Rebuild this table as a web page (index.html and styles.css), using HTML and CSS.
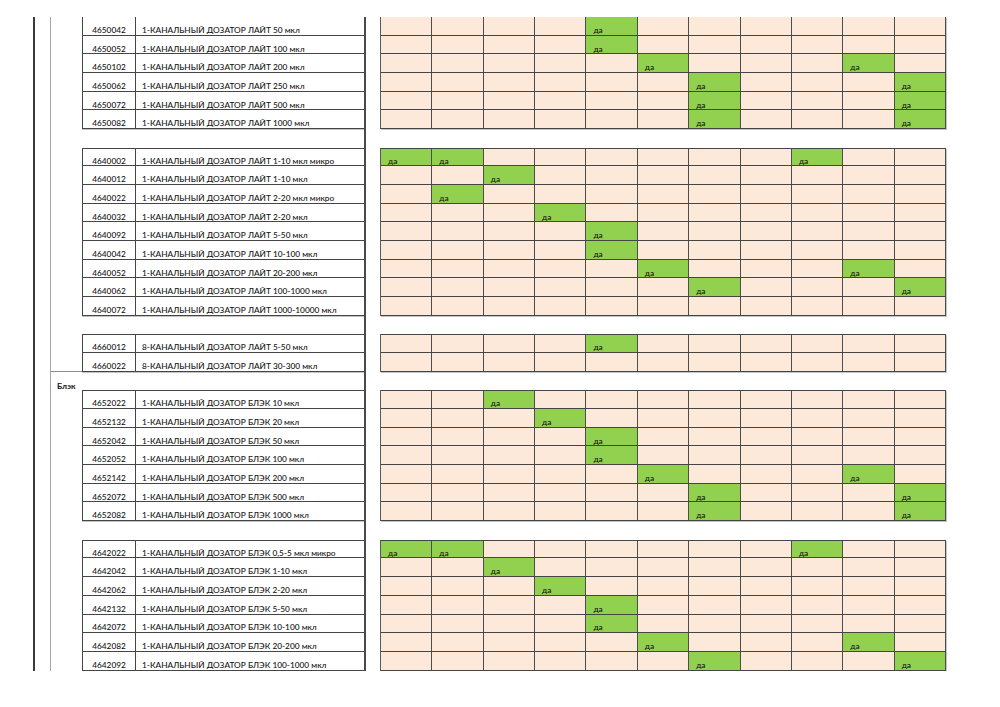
FILE: index.html
```html
<!DOCTYPE html>
<html lang="ru">
<head>
<meta charset="utf-8">
<title>Дозаторы</title>
<link rel="stylesheet" href="styles.css">
</head>
<body>
<div class="sheet">
  <div class="left">
    <div class="inner">
      <div class="grp first">
        <div class="row"><span class="code">4650042</span><span class="name">1-КАНАЛЬНЫЙ ДОЗАТОР ЛАЙТ 50 мкл</span></div>
        <div class="row"><span class="code">4650052</span><span class="name">1-КАНАЛЬНЫЙ ДОЗАТОР ЛАЙТ 100 мкл</span></div>
        <div class="row"><span class="code">4650102</span><span class="name">1-КАНАЛЬНЫЙ ДОЗАТОР ЛАЙТ 200 мкл</span></div>
        <div class="row"><span class="code">4650062</span><span class="name">1-КАНАЛЬНЫЙ ДОЗАТОР ЛАЙТ 250 мкл</span></div>
        <div class="row"><span class="code">4650072</span><span class="name">1-КАНАЛЬНЫЙ ДОЗАТОР ЛАЙТ 500 мкл</span></div>
        <div class="row"><span class="code">4650082</span><span class="name">1-КАНАЛЬНЫЙ ДОЗАТОР ЛАЙТ 1000 мкл</span></div>
      </div>
      <div class="gap"></div>
      <div class="grp">
        <div class="row"><span class="code">4640002</span><span class="name">1-КАНАЛЬНЫЙ ДОЗАТОР ЛАЙТ 1-10 мкл микро</span></div>
        <div class="row"><span class="code">4640012</span><span class="name">1-КАНАЛЬНЫЙ ДОЗАТОР ЛАЙТ 1-10 мкл</span></div>
        <div class="row"><span class="code">4640022</span><span class="name">1-КАНАЛЬНЫЙ ДОЗАТОР ЛАЙТ 2-20 мкл микро</span></div>
        <div class="row"><span class="code">4640032</span><span class="name">1-КАНАЛЬНЫЙ ДОЗАТОР ЛАЙТ 2-20 мкл</span></div>
        <div class="row"><span class="code">4640092</span><span class="name">1-КАНАЛЬНЫЙ ДОЗАТОР ЛАЙТ 5-50 мкл</span></div>
        <div class="row"><span class="code">4640042</span><span class="name">1-КАНАЛЬНЫЙ ДОЗАТОР ЛАЙТ 10-100 мкл</span></div>
        <div class="row"><span class="code">4640052</span><span class="name">1-КАНАЛЬНЫЙ ДОЗАТОР ЛАЙТ 20-200 мкл</span></div>
        <div class="row"><span class="code">4640062</span><span class="name">1-КАНАЛЬНЫЙ ДОЗАТОР ЛАЙТ 100-1000 мкл</span></div>
        <div class="row"><span class="code">4640072</span><span class="name">1-КАНАЛЬНЫЙ ДОЗАТОР ЛАЙТ 1000-10000 мкл</span></div>
      </div>
      <div class="gap"></div>
      <div class="grp">
        <div class="row"><span class="code">4660012</span><span class="name">8-КАНАЛЬНЫЙ ДОЗАТОР ЛАЙТ 5-50 мкл</span></div>
        <div class="row"><span class="code">4660022</span><span class="name">8-КАНАЛЬНЫЙ ДОЗАТОР ЛАЙТ 30-300 мкл</span></div>
      </div>
      <div class="sect">Блэк</div>
      <div class="grp">
        <div class="row"><span class="code">4652022</span><span class="name">1-КАНАЛЬНЫЙ ДОЗАТОР БЛЭК 10 мкл</span></div>
        <div class="row"><span class="code">4652132</span><span class="name">1-КАНАЛЬНЫЙ ДОЗАТОР БЛЭК 20 мкл</span></div>
        <div class="row"><span class="code">4652042</span><span class="name">1-КАНАЛЬНЫЙ ДОЗАТОР БЛЭК 50 мкл</span></div>
        <div class="row"><span class="code">4652052</span><span class="name">1-КАНАЛЬНЫЙ ДОЗАТОР БЛЭК 100 мкл</span></div>
        <div class="row"><span class="code">4652142</span><span class="name">1-КАНАЛЬНЫЙ ДОЗАТОР БЛЭК 200 мкл</span></div>
        <div class="row"><span class="code">4652072</span><span class="name">1-КАНАЛЬНЫЙ ДОЗАТОР БЛЭК 500 мкл</span></div>
        <div class="row"><span class="code">4652082</span><span class="name">1-КАНАЛЬНЫЙ ДОЗАТОР БЛЭК 1000 мкл</span></div>
      </div>
      <div class="gap"></div>
      <div class="grp">
        <div class="row"><span class="code">4642022</span><span class="name">1-КАНАЛЬНЫЙ ДОЗАТОР БЛЭК 0,5-5 мкл микро</span></div>
        <div class="row"><span class="code">4642042</span><span class="name">1-КАНАЛЬНЫЙ ДОЗАТОР БЛЭК 1-10 мкл</span></div>
        <div class="row"><span class="code">4642062</span><span class="name">1-КАНАЛЬНЫЙ ДОЗАТОР БЛЭК 2-20 мкл</span></div>
        <div class="row"><span class="code">4642132</span><span class="name">1-КАНАЛЬНЫЙ ДОЗАТОР БЛЭК 5-50 мкл</span></div>
        <div class="row"><span class="code">4642072</span><span class="name">1-КАНАЛЬНЫЙ ДОЗАТОР БЛЭК 10-100 мкл</span></div>
        <div class="row"><span class="code">4642082</span><span class="name">1-КАНАЛЬНЫЙ ДОЗАТОР БЛЭК 20-200 мкл</span></div>
        <div class="row"><span class="code">4642092</span><span class="name">1-КАНАЛЬНЫЙ ДОЗАТОР БЛЭК 100-1000 мкл</span></div>
      </div>
    </div>
  </div>

  <div class="right">
    <div class="rgrp first">
      <div class="rrow"><i></i><i></i><i></i><i></i><i class="y">да</i><i></i><i></i><i></i><i></i><i></i><i></i></div>
      <div class="rrow"><i></i><i></i><i></i><i></i><i class="y">да</i><i></i><i></i><i></i><i></i><i></i><i></i></div>
      <div class="rrow"><i></i><i></i><i></i><i></i><i></i><i class="y">да</i><i></i><i></i><i></i><i class="y">да</i><i></i></div>
      <div class="rrow"><i></i><i></i><i></i><i></i><i></i><i></i><i class="y">да</i><i></i><i></i><i></i><i class="y">да</i></div>
      <div class="rrow"><i></i><i></i><i></i><i></i><i></i><i></i><i class="y">да</i><i></i><i></i><i></i><i class="y">да</i></div>
      <div class="rrow"><i></i><i></i><i></i><i></i><i></i><i></i><i class="y">да</i><i></i><i></i><i></i><i class="y">да</i></div>
    </div>
    <div class="gap"></div>
    <div class="rgrp">
      <div class="rrow"><i class="y">да</i><i class="y">да</i><i></i><i></i><i></i><i></i><i></i><i></i><i class="y">да</i><i></i><i></i></div>
      <div class="rrow"><i></i><i></i><i class="y">да</i><i></i><i></i><i></i><i></i><i></i><i></i><i></i><i></i></div>
      <div class="rrow"><i></i><i class="y">да</i><i></i><i></i><i></i><i></i><i></i><i></i><i></i><i></i><i></i></div>
      <div class="rrow"><i></i><i></i><i></i><i class="y">да</i><i></i><i></i><i></i><i></i><i></i><i></i><i></i></div>
      <div class="rrow"><i></i><i></i><i></i><i></i><i class="y">да</i><i></i><i></i><i></i><i></i><i></i><i></i></div>
      <div class="rrow"><i></i><i></i><i></i><i></i><i class="y">да</i><i></i><i></i><i></i><i></i><i></i><i></i></div>
      <div class="rrow"><i></i><i></i><i></i><i></i><i></i><i class="y">да</i><i></i><i></i><i></i><i class="y">да</i><i></i></div>
      <div class="rrow"><i></i><i></i><i></i><i></i><i></i><i></i><i class="y">да</i><i></i><i></i><i></i><i class="y">да</i></div>
      <div class="rrow"><i></i><i></i><i></i><i></i><i></i><i></i><i></i><i></i><i></i><i></i><i></i></div>
    </div>
    <div class="gap"></div>
    <div class="rgrp">
      <div class="rrow"><i></i><i></i><i></i><i></i><i class="y">да</i><i></i><i></i><i></i><i></i><i></i><i></i></div>
      <div class="rrow"><i></i><i></i><i></i><i></i><i></i><i></i><i></i><i></i><i></i><i></i><i></i></div>
    </div>
    <div class="gap"></div>
    <div class="rgrp">
      <div class="rrow"><i></i><i></i><i class="y">да</i><i></i><i></i><i></i><i></i><i></i><i></i><i></i><i></i></div>
      <div class="rrow"><i></i><i></i><i></i><i class="y">да</i><i></i><i></i><i></i><i></i><i></i><i></i><i></i></div>
      <div class="rrow"><i></i><i></i><i></i><i></i><i class="y">да</i><i></i><i></i><i></i><i></i><i></i><i></i></div>
      <div class="rrow"><i></i><i></i><i></i><i></i><i class="y">да</i><i></i><i></i><i></i><i></i><i></i><i></i></div>
      <div class="rrow"><i></i><i></i><i></i><i></i><i></i><i class="y">да</i><i></i><i></i><i></i><i class="y">да</i><i></i></div>
      <div class="rrow"><i></i><i></i><i></i><i></i><i></i><i></i><i class="y">да</i><i></i><i></i><i></i><i class="y">да</i></div>
      <div class="rrow"><i></i><i></i><i></i><i></i><i></i><i></i><i class="y">да</i><i></i><i></i><i></i><i class="y">да</i></div>
    </div>
    <div class="gap"></div>
    <div class="rgrp">
      <div class="rrow"><i class="y">да</i><i class="y">да</i><i></i><i></i><i></i><i></i><i></i><i></i><i class="y">да</i><i></i><i></i></div>
      <div class="rrow"><i></i><i></i><i class="y">да</i><i></i><i></i><i></i><i></i><i></i><i></i><i></i><i></i></div>
      <div class="rrow"><i></i><i></i><i></i><i class="y">да</i><i></i><i></i><i></i><i></i><i></i><i></i><i></i></div>
      <div class="rrow"><i></i><i></i><i></i><i></i><i class="y">да</i><i></i><i></i><i></i><i></i><i></i><i></i></div>
      <div class="rrow"><i></i><i></i><i></i><i></i><i class="y">да</i><i></i><i></i><i></i><i></i><i></i><i></i></div>
      <div class="rrow"><i></i><i></i><i></i><i></i><i></i><i class="y">да</i><i></i><i></i><i></i><i class="y">да</i><i></i></div>
      <div class="rrow"><i></i><i></i><i></i><i></i><i></i><i></i><i class="y">да</i><i></i><i></i><i></i><i class="y">да</i></div>
    </div>
  </div>
</div>
</body>
</html>
```

FILE: styles.css
```css
* { box-sizing: border-box; }
html, body { margin: 0; padding: 0; background: #fff; }
body {
  font-family: Lato, "Open Sans", "Liberation Sans", sans-serif;
  font-size: 8.3px;
  font-weight: 500;
  color: #141414;
}
.sheet {
  display: flex;
  align-items: flex-start;
  padding-top: 17px;
  padding-left: 33px;
}
.left {
  width: 333px;
  border-left: 2px solid #3a3a3a;
  border-right: 2px solid #4a4a4a;
}
.inner {
  margin-left: 15px;
  border-left: 1px solid #a6a6a6;
}
.gap { height: 18.686px; }
.grp {
  position: relative;
  margin-left: 31px;
  border-left: 1px solid #454545;
  box-shadow: 0 1px 0 #c4c4c4;
}
.row {
  display: flex;
  height: 18.686px;
  border-bottom: 1px solid #454545;
}
.grp:not(.first) .row:first-child { border-top: 1px solid #454545; }
.row span {
  display: flex;
  align-items: flex-end;
  padding-bottom: 0.4px;
  line-height: 1;
  white-space: nowrap;
}
.code {
  width: 53px;
  justify-content: center;
  border-right: 1px solid #454545;
}
.name {
  flex: 1;
  padding-left: 6px;
}
.sect {
  height: 19.686px;
  margin-top: -1px;
  border-top: 1px solid #8c8c8c;
  display: flex;
  align-items: flex-end;
  padding-left: 6px;
  padding-bottom: 0.4px;
  font-weight: bold;
  line-height: 1;
}
.right {
  margin-left: 14px;
  width: 566px;
}
.rgrp {
  border-left: 1px solid #5a5a5a;
  box-shadow: 1px 1px 0 #c4c4c4;
}
.rrow {
  display: grid;
  grid-template-columns: repeat(11, 1fr);
  height: 18.686px;
  border-bottom: 1px solid #454545;
  background: #fde9d9;
}
.rgrp:not(.first) .rrow:first-child { border-top: 1px solid #454545; }
.rrow i {
  font-style: normal;
  border-right: 1px solid #4d4d4d;
  display: flex;
  align-items: flex-end;
  padding-left: 7px;
  padding-bottom: 0.4px;
  line-height: 1;
}
.rrow i.y { background: #92d050; }
```
